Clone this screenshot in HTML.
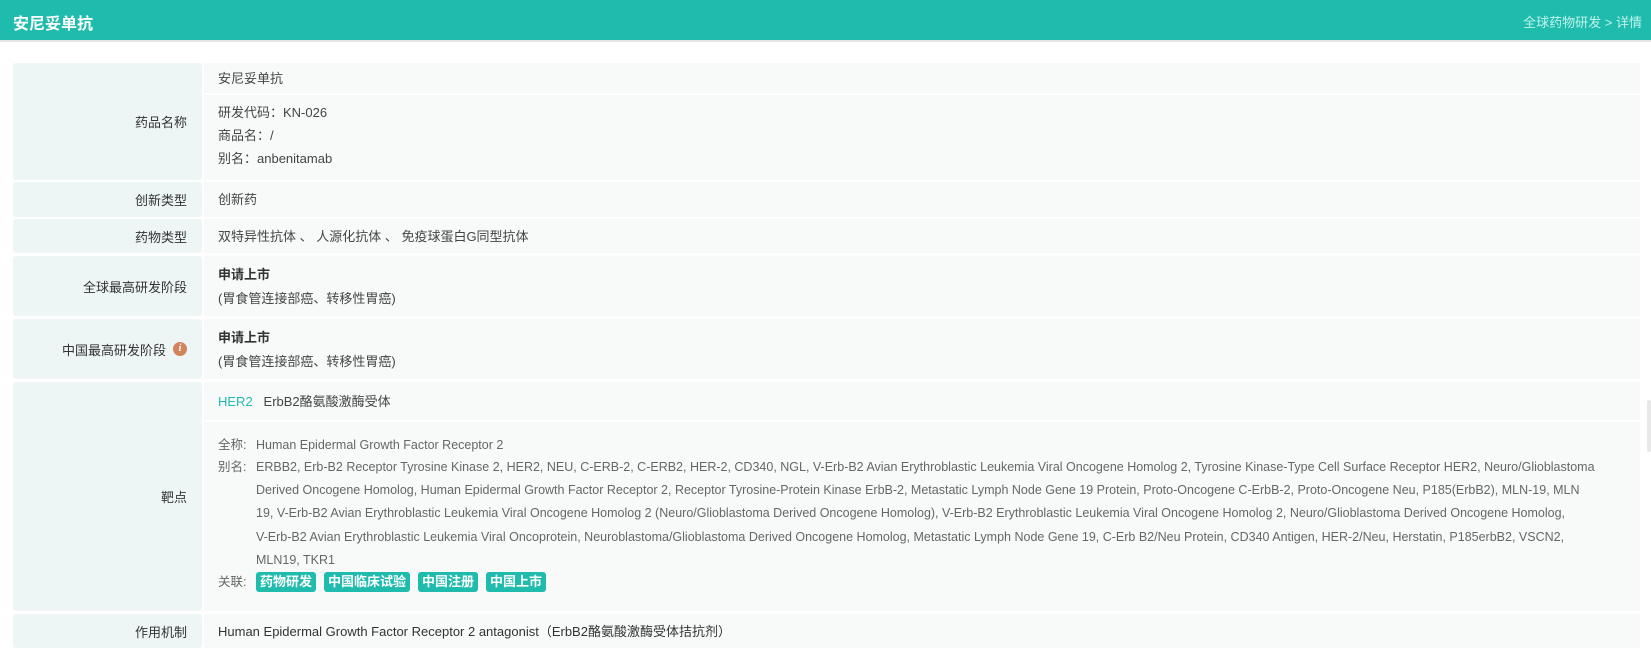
<!DOCTYPE html>
<html><head><meta charset="utf-8"><style>
*{margin:0;padding:0;box-sizing:border-box}
body{width:1651px;height:650px;background:#fff;font-family:"Liberation Sans","Noto Sans CJK SC",sans-serif;position:relative;overflow:hidden;color:#333}
.hdr{position:absolute;left:0;top:0;width:1651px;height:42px;background:#1fbcae;border-bottom:2px solid #e6e6e6}
.hdr .t{position:absolute;left:13px;top:10px;color:#fff;font-size:16px;font-weight:bold}
.hdr .r{position:absolute;right:9px;top:12px;color:#bff3ea;font-size:13px}
.l{position:absolute;left:13px;width:189px;background:#eef5f5;border-radius:3px;font-size:13px;color:#333;display:flex;align-items:center;justify-content:flex-end;padding-right:15px}
.c{position:absolute;left:204px;width:1436px;background:#f8fafa;font-size:13px;color:#444}
.p{position:absolute;white-space:nowrap;line-height:23px;left:14px}
.g{color:#666;font-size:12.5px;line-height:23.2px}
.tag{display:inline-block;background:#1fbcae;color:#fff;font-weight:bold;border-radius:3px;padding:0 4px;height:20px;line-height:20px;margin-right:8px;font-size:13px}
.ic{display:inline-block;width:14px;height:14px;border-radius:50%;background:#d2845c;color:#fff;font-size:10px;font-style:italic;font-weight:bold;text-align:center;line-height:14px;margin-left:7px;font-family:"Liberation Serif",serif}
</style></head><body>
<div class="hdr"><div class="t">安尼妥单抗</div><div class="r">全球药物研发 &gt; 详情</div></div>

<div class="l" style="top:63px;height:117px">药品名称</div>
<div class="c" style="top:63px;height:30px"><div class="p" style="top:4px">安尼妥单抗</div></div>
<div class="c" style="top:95px;height:85px"><div class="p" style="top:6px">研发代码：KN-026<br>商品名：/<br>别名：anbenitamab</div></div>

<div class="l" style="top:182px;height:35px">创新类型</div>
<div class="c" style="top:182px;height:35px"><div class="p" style="top:6px">创新药</div></div>

<div class="l" style="top:219px;height:34px">药物类型</div>
<div class="c" style="top:219px;height:34px"><div class="p" style="top:6px">双特异性抗体 、 人源化抗体 、 免疫球蛋白G同型抗体</div></div>

<div class="l" style="top:256px;height:60px">全球最高研发阶段</div>
<div class="c" style="top:256px;height:60px"><div class="p" style="top:7px;line-height:24px"><b style="color:#333">申请上市</b><br>(胃食管连接部癌、转移性胃癌)</div></div>

<div class="l" style="top:319px;height:60px">中国最高研发阶段<span class="ic">i</span></div>
<div class="c" style="top:319px;height:60px"><div class="p" style="top:7px;line-height:24px"><b style="color:#333">申请上市</b><br>(胃食管连接部癌、转移性胃癌)</div></div>

<div class="l" style="top:382px;height:229px">靶点</div>
<div class="c" style="top:382px;height:38px"><div class="p" style="top:8px"><span style="color:#1fbcae">HER2</span>&nbsp;&nbsp; ErbB2酪氨酸激酶受体</div></div>
<div class="c" style="top:422px;height:189px">
<div class="p g" style="top:12px;left:14px">全称:</div><div class="p g" style="top:12px;left:52px">Human Epidermal Growth Factor Receptor 2</div>
<div class="p g" style="top:34px;left:14px">别名:</div>
<div class="p g" style="top:34px;left:52px">ERBB2, Erb-B2 Receptor Tyrosine Kinase 2, HER2, NEU, C-ERB-2, C-ERB2, HER-2, CD340, NGL, V-Erb-B2 Avian Erythroblastic Leukemia Viral Oncogene Homolog 2, Tyrosine Kinase-Type Cell Surface Receptor HER2, Neuro/Glioblastoma<br>Derived Oncogene Homolog, Human Epidermal Growth Factor Receptor 2, Receptor Tyrosine-Protein Kinase ErbB-2, Metastatic Lymph Node Gene 19 Protein, Proto-Oncogene C-ErbB-2, Proto-Oncogene Neu, P185(ErbB2), MLN-19, MLN<br>19, V-Erb-B2 Avian Erythroblastic Leukemia Viral Oncogene Homolog 2 (Neuro/Glioblastoma Derived Oncogene Homolog), V-Erb-B2 Erythroblastic Leukemia Viral Oncogene Homolog 2, Neuro/Glioblastoma Derived Oncogene Homolog,<br>V-Erb-B2 Avian Erythroblastic Leukemia Viral Oncoprotein, Neuroblastoma/Glioblastoma Derived Oncogene Homolog, Metastatic Lymph Node Gene 19, C-Erb B2/Neu Protein, CD340 Antigen, HER-2/Neu, Herstatin, P185erbB2, VSCN2,<br>MLN19, TKR1</div>
<div class="p g" style="top:149px;left:14px">关联:</div>
<div class="p" style="top:150px;left:52px;line-height:20px"><span class="tag">药物研发</span><span class="tag">中国临床试验</span><span class="tag">中国注册</span><span class="tag">中国上市</span></div>
</div>

<div class="l" style="top:614px;height:34px">作用机制</div>
<div class="c" style="top:614px;height:34px"><div class="p" style="top:6px;color:#333">Human Epidermal Growth Factor Receptor 2 antagonist（ErbB2酪氨酸激酶受体拮抗剂）</div></div>

<div style="position:absolute;left:1647px;top:400px;width:4px;height:52px;background:#e8e8e8;border-radius:2px"></div>
</body></html>
